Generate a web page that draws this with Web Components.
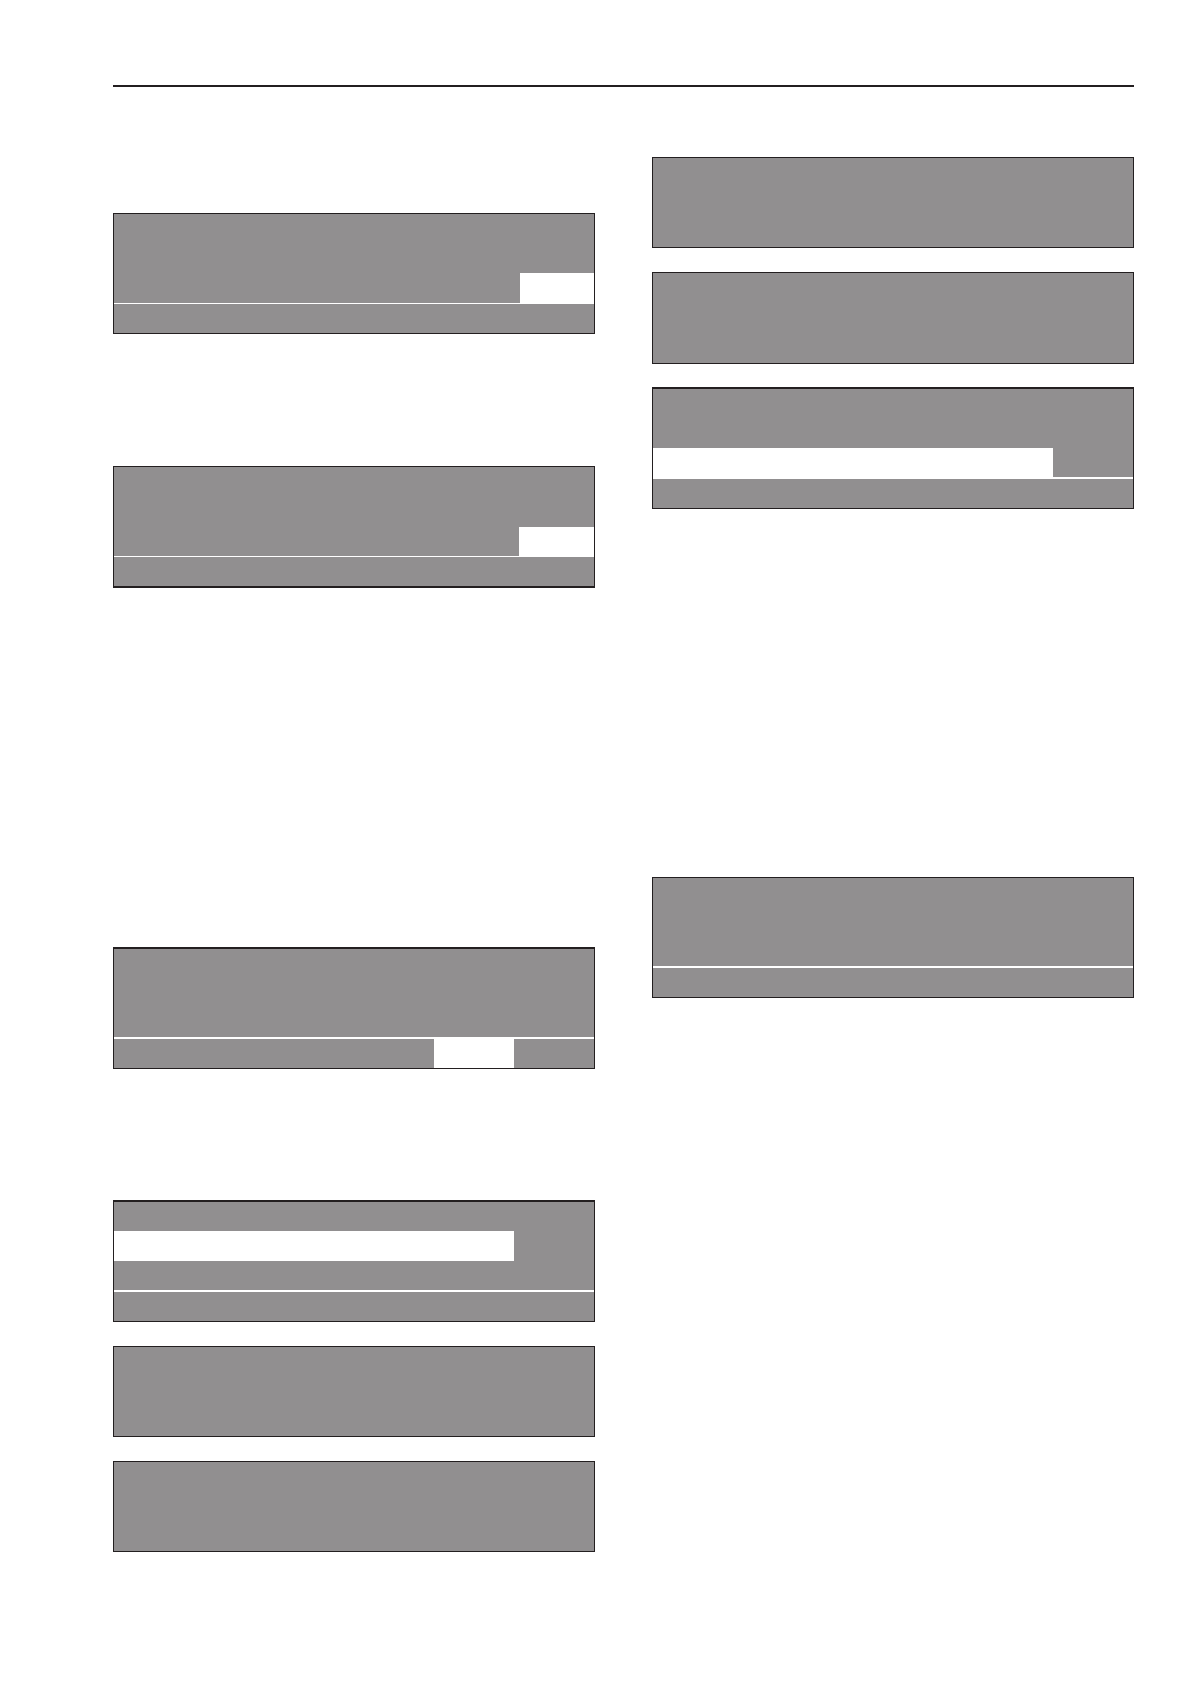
<!DOCTYPE html>
<html lang="en">
<head>
<meta charset="utf-8">
<title>Display panels</title>
<style>
  body {
    margin: 0;
    background: #fff;
    font-family: "Liberation Sans", sans-serif;
  }
</style>
</head>
<body>
<manual-page>
  <panel-column slot="left" style="--top: 126px">
    <lcd-panel>
      <lcd-row style="--height: 59px"></lcd-row>
      <lcd-row style="--height: 30px; --columns: 406fr 74fr 0fr" marked></lcd-row>
      <lcd-row line="thin"></lcd-row>
    </lcd-panel>
    <lcd-panel style="--before: 132px; --border-bottom: 2px">
      <lcd-row style="--height: 60px"></lcd-row>
      <lcd-row style="--columns: 405fr 75fr 0fr" marked></lcd-row>
      <lcd-row line="thin"></lcd-row>
    </lcd-panel>
    <lcd-panel style="--before: 359px; --border-top: 2px">
      <lcd-row style="--height: 88px"></lcd-row>
      <lcd-row line="thick" style="--columns: 4fr 1fr 1fr" marked></lcd-row>
    </lcd-panel>
    <lcd-panel style="--before: 131px; --border-top: 2px">
      <lcd-row></lcd-row>
      <lcd-row style="--height: 30px; --columns: 0fr 5fr 1fr" marked></lcd-row>
      <lcd-row></lcd-row>
      <lcd-row line="thick"></lcd-row>
    </lcd-panel>
    <lcd-panel style="--before: 24px">
      <lcd-row style="--height: 89px"></lcd-row>
    </lcd-panel>
    <lcd-panel style="--before: 24px">
      <lcd-row style="--height: 89px"></lcd-row>
    </lcd-panel>
  </panel-column>

  <panel-column slot="right" style="--top: 70px">
    <lcd-panel>
      <lcd-row style="--height: 89px"></lcd-row>
    </lcd-panel>
    <lcd-panel style="--before: 24px">
      <lcd-row style="--height: 90px"></lcd-row>
    </lcd-panel>
    <lcd-panel style="--before: 23px; --border-top: 2px">
      <lcd-row style="--height: 59px"></lcd-row>
      <lcd-row style="--columns: 0fr 5fr 1fr" marked></lcd-row>
      <lcd-row line="thick"></lcd-row>
    </lcd-panel>
    <lcd-panel style="--before: 368px">
      <lcd-row style="--height: 88px"></lcd-row>
      <lcd-row line="thick"></lcd-row>
    </lcd-panel>
  </panel-column>
</manual-page>

<script>
const pageTemplate = document.createElement('template')
pageTemplate.innerHTML = `
  <style>
    :host {
      display: block;
      padding: 85px 56px 132px 113px;
    }
    hr {
      margin: 0;
      border: none;
      border-top: 2px solid #231f20;
    }
    .columns {
      display: grid;
      grid-template-columns: 1fr 1fr;
      column-gap: 57px;
      align-items: start;
    }
  </style>
  <hr>
  <div class="columns">
    <slot name="left"></slot>
    <slot name="right"></slot>
  </div>
`

const columnTemplate = document.createElement('template')
columnTemplate.innerHTML = `
  <style>
    :host {
      display: flex;
      flex-direction: column;
      padding-top: var(--top, 0);
    }
  </style>
  <slot></slot>
`

const panelTemplate = document.createElement('template')
panelTemplate.innerHTML = `
  <style>
    :host {
      display: block;
      margin-top: var(--before, 0);
      background: #918f90;
      border: 1px solid #231f20;
      border-top-width: var(--border-top, 1px);
      border-bottom-width: var(--border-bottom, 1px);
    }
  </style>
  <slot></slot>
`

// a marked row has a white block in its middle track
const rowTemplate = document.createElement('template')
rowTemplate.innerHTML = `
  <style>
    :host {
      display: grid;
      grid-template-columns: var(--columns, 1fr);
      grid-template-rows: minmax(var(--height, 29px), auto);
    }
    :host([line="thin"]) {
      border-top: 1px solid #fff;
    }
    :host([line="thick"]) {
      border-top: 2px solid #fff;
    }
    .mark {
      display: none;
      grid-column: 2;
      background: #fff;
    }
    :host([marked]) .mark {
      display: block;
    }
  </style>
  <div class="mark"><slot></slot></div>
`

class ManualPage extends HTMLElement {
  constructor() {
    super()
    this.attachShadow({ mode: 'open' }).append(pageTemplate.content.cloneNode(true))
  }
}

class PanelColumn extends HTMLElement {
  constructor() {
    super()
    this.attachShadow({ mode: 'open' }).append(columnTemplate.content.cloneNode(true))
  }
}

class LcdPanel extends HTMLElement {
  constructor() {
    super()
    this.attachShadow({ mode: 'open' }).append(panelTemplate.content.cloneNode(true))
  }
}

class LcdRow extends HTMLElement {
  constructor() {
    super()
    this.attachShadow({ mode: 'open' }).append(rowTemplate.content.cloneNode(true))
  }
}

customElements.define('manual-page', ManualPage)
customElements.define('panel-column', PanelColumn)
customElements.define('lcd-panel', LcdPanel)
customElements.define('lcd-row', LcdRow)
</script>
</body>
</html>
